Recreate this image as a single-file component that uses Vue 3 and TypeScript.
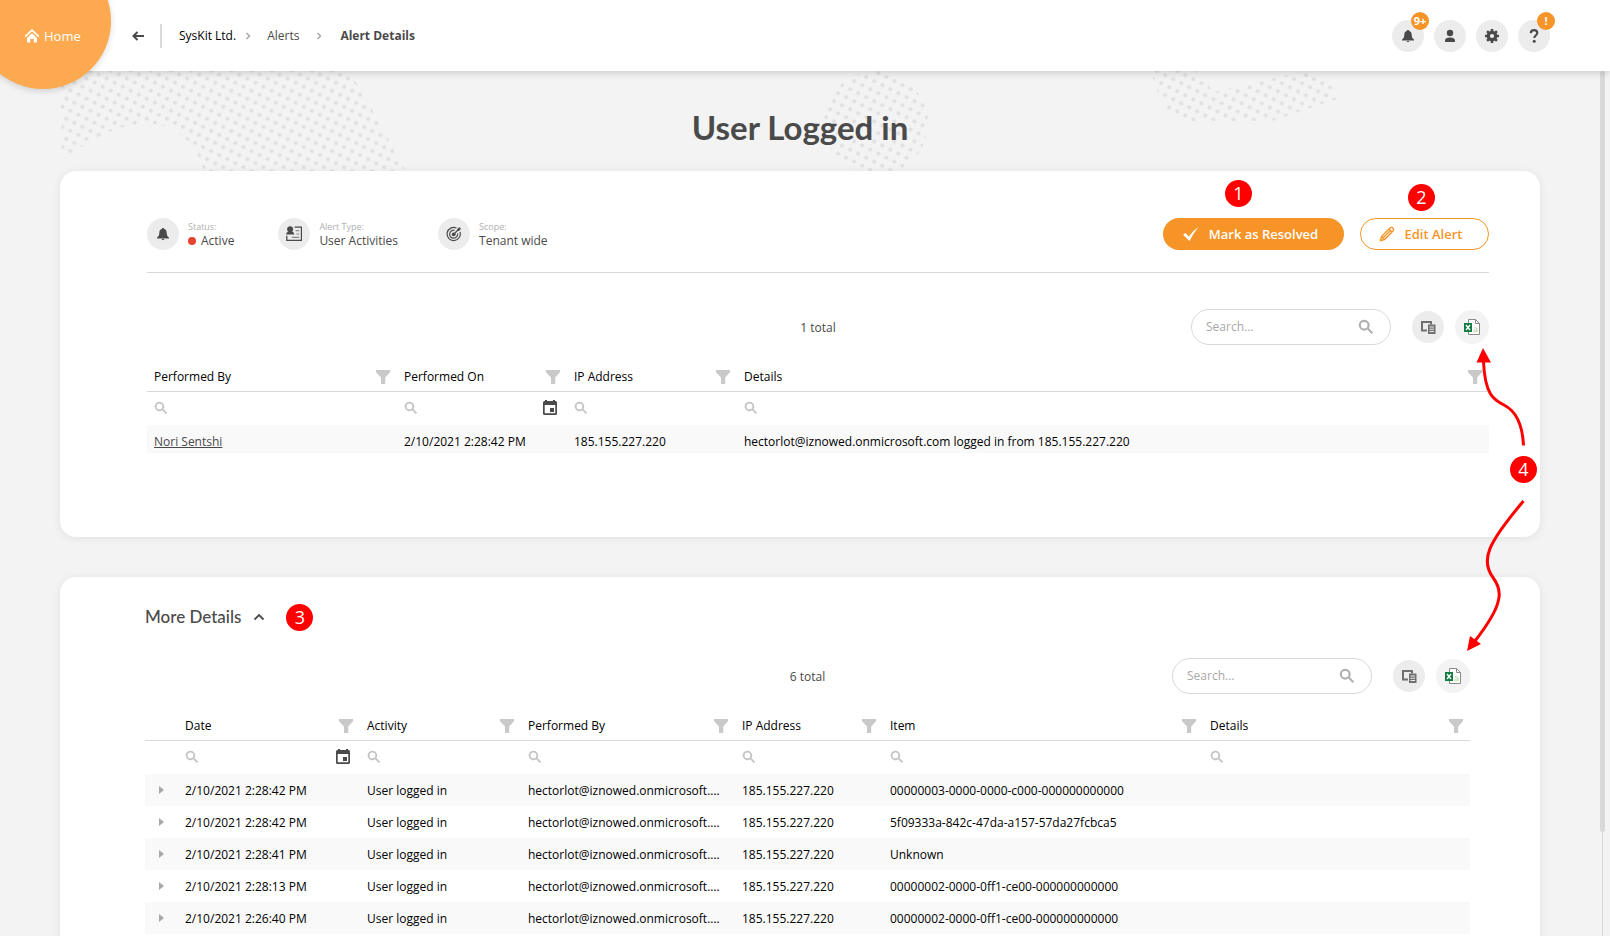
<script setup lang="ts">
import { ref } from 'vue'

interface Column {
  key: string
  label: string
  width: string
  date?: boolean
}

const alertColumns: Column[] = [
  { key: 'by', label: 'Performed By', width: '250px' },
  { key: 'on', label: 'Performed On', width: '170px', date: true },
  { key: 'ip', label: 'IP Address', width: '170px' },
  { key: 'details', label: 'Details', width: 'auto' },
]

const detailColumns: Column[] = [
  { key: 'date', label: 'Date', width: '182px', date: true },
  { key: 'activity', label: 'Activity', width: '161px' },
  { key: 'by', label: 'Performed By', width: '214px' },
  { key: 'ip', label: 'IP Address', width: '148px' },
  { key: 'item', label: 'Item', width: '320px' },
  { key: 'details', label: 'Details', width: 'auto' },
]

const user = 'hectorlot@iznowed.onmicrosoft.com'
const ip = '185.155.227.220'

function entry(date: string, item: string): Record<string, string> {
  return { date, activity: 'User logged in', by: user, ip, item, details: '' }
}

const detailRows = [
  entry('2/10/2021 2:28:42 PM', '00000003-0000-0000-c000-000000000000'),
  entry('2/10/2021 2:28:42 PM', '5f09333a-842c-47da-a157-57da27fcbca5'),
  entry('2/10/2021 2:28:41 PM', 'Unknown'),
  entry('2/10/2021 2:28:13 PM', '00000002-0000-0ff1-ce00-000000000000'),
  entry('2/10/2021 2:26:40 PM', '00000002-0000-0ff1-ce00-000000000000'),
]

const expanded = ref(true)
const alertSearch = ref('')
const detailSearch = ref('')
</script>

<template>
  <svg class="defs" aria-hidden="true">
    <defs>
      <symbol id="i-bell" viewBox="0 0 14 14">
        <path d="M7 1c.7 0 1.200.4 1.200 1 1.700.5 2.500 1.900 2.500 3.800 0 2.700.8 3.600 2.300 4.800v1H1v-1C2.500 9.400 3.300 8.500 3.300 5.800 3.300 3.900 4.100 2.500 5.800 2 5.800 1.400 6.300 1 7 1zM5.700 12h2.600c0 .7-.6 1.200-1.300 1.200S5.700 12.700 5.700 12z" />
      </symbol>
      <symbol id="i-search" viewBox="0 0 16 16">
        <path d="M6.200.8a5.400 5.400 0 1 0 3.100 9.800l4.200 4.300 1.500-1.500-4.200-4.300A5.400 5.400 0 0 0 6.200.8zm0 2.100a3.300 3.300 0 1 1 0 6.600 3.300 3.300 0 0 1 0-6.600z" />
      </symbol>
      <symbol id="i-funnel" viewBox="0 0 14 14">
        <path d="M0 0h14v2.200L9.200 7.500V14H5V7.500L0 2.200z" />
      </symbol>
      <symbol id="i-calendar" viewBox="0 0 14 15">
        <path d="M2 0h2v1h6V0h2v1H12.500A1.500 1.500 0 0 1 14 2.500v11a1.500 1.500 0 0 1-1.500 1.500h-11A1.500 1.500 0 0 1 0 13.500v-11A1.500 1.500 0 0 1 1.500 1H2zM1.700 5v8.300h10.600V5zM7 8h4v4H7z" />
      </symbol>
      <symbol id="i-columns" viewBox="0 0 16 16">
        <path d="M1 2h11v3.500h-2V4H3v6.500h4v2H1z" />
        <path d="M8 5.500h7.500V15H8zM9.500 7.500v1h4.500v-1zm0 2.300v1h4.500v-1zm0 2.300v1h4.500v-1z" fill-rule="evenodd" />
      </symbol>
      <symbol id="i-excel" viewBox="0 0 18 18">
        <path d="M5.500 1.500h7l4 4v11h-11z" fill="#fff" stroke="#8a8a8a" />
        <path d="M12.500 1.500v4h4" fill="none" stroke="#8a8a8a" />
        <path d="M11 10.200c1.500-.9 3-.5 3 .8v3m0-2c-2-.1-3.300.3-3.300 1.200 0 1.200 2.600 1.100 3.300-.4" fill="none" stroke="#b5dba8" />
        <path d="M1 5h8v9H1z" fill="#107c41" />
        <path d="M3 7l4 5M7 7l-4 5" stroke="#fff" stroke-width="1.400" />
      </symbol>
      <symbol id="i-chevron" viewBox="0 0 6 10">
        <path d="M1.500 2 4.500 5 1.500 8" fill="none" stroke="#a8a8a8" stroke-width="1.500" />
      </symbol>
      <pattern id="dots" width="9" height="9" patternUnits="userSpaceOnUse" patternTransform="rotate(26.600)">
        <circle cx="4.500" cy="4.500" r="2" fill="#e0e0e0" />
      </pattern>
    </defs>
  </svg>

  <div class="page">
    <header class="topbar">
      <a class="home" href="#">
        <svg class="home-icon" viewBox="0 0 14 14" aria-hidden="true">
          <path d="M.6 7.200 7 1.200l6.400 6" fill="none" stroke="#fff" stroke-width="1.700" stroke-linecap="round" />
          <path d="M7 4.200 12 9v3.500a1 1 0 0 1-1 1H8.700V10H5.300v3.500H3a1 1 0 0 1-1-1V9z" fill="#fff" />
        </svg>
        Home
      </a>
      <button class="back" type="button" aria-label="Back">
        <svg viewBox="0 0 12 10" aria-hidden="true">
          <path d="M12 5H1.500M5.500 1l-4 4 4 4" fill="none" stroke="#4a4a4a" stroke-width="2" />
        </svg>
      </button>
      <nav class="crumbs" aria-label="Breadcrumb">
        <a class="root" href="#">SysKit Ltd.</a>
        <svg class="chevron" aria-hidden="true"><use href="#i-chevron" /></svg>
        <a class="parent" href="#">Alerts</a>
        <svg class="chevron" aria-hidden="true"><use href="#i-chevron" /></svg>
        <span class="current">Alert Details</span>
      </nav>
      <div class="actions">
        <button class="round" type="button" aria-label="Notifications">
          <svg class="i14" aria-hidden="true"><use href="#i-bell" /></svg>
          <span class="badge">9+</span>
        </button>
        <button class="round" type="button" aria-label="Account">
          <svg class="i14" viewBox="0 0 14 14" aria-hidden="true">
            <circle cx="7" cy="4" r="3.200" />
            <path d="M2 13v-1.500C2 9.500 4 8.500 7 8.500s5 1 5 3V13z" />
          </svg>
        </button>
        <button class="round" type="button" aria-label="Settings">
          <svg class="i14" viewBox="0 0 14 14" aria-hidden="true">
            <circle cx="7" cy="7" r="3.700" fill="none" stroke="#4a4a4a" stroke-width="3.200" />
            <path d="M7 0v3M7 11v3M0 7h3M11 7h3M2.050 2.050l2 2M9.950 9.950l2 2M2.050 11.950l2-2M9.950 4.050l2-2" stroke="#4a4a4a" stroke-width="2.600" />
          </svg>
        </button>
        <button class="round" type="button" aria-label="Help">
          <svg class="i14" viewBox="0 0 14 14" aria-hidden="true">
            <path d="M3.800 4.200C3.800 2 5.200 1.100 7 1.100s3.300 1 3.300 2.900c0 2.200-3 2.300-3 5" fill="none" stroke="#4a4a4a" stroke-width="2.100" />
            <circle cx="7.200" cy="12.300" r="1.500" />
          </svg>
          <span class="badge">!</span>
        </button>
      </div>
    </header>

    <div class="body">
      <svg class="deco deco-left" viewBox="0 71 420 100" aria-hidden="true">
        <path d="M60 71H348Q362 90 382 128L406 171H204Q190 126 148 123 110 124 62 160z" fill="url(#dots)" />
      </svg>
      <svg class="deco deco-mid" viewBox="0 0 104 100" aria-hidden="true">
        <circle cx="52" cy="52" r="52" fill="url(#dots)" />
      </svg>
      <svg class="deco deco-right" viewBox="1140 71 210 60" aria-hidden="true">
        <path d="M1151 71Q1160 110 1180 121H1272L1340 98Q1330 78 1305 71L1214 92 1196 71z" fill="url(#dots)" />
      </svg>

      <h1>User Logged in</h1>

      <section class="card first">
        <div class="meta">
          <div class="fact">
            <span class="disc"><svg class="i14" aria-hidden="true"><use href="#i-bell" /></svg></span>
            <div class="fact-text"><small>Status:</small><p><i class="dot"></i>Active</p></div>
          </div>
          <div class="fact">
            <span class="disc">
              <svg class="i16" viewBox="0 0 14 14" aria-hidden="true">
                <path d="M7.500 1h6v11.500H.7V8.500" fill="none" stroke="#4a4a4a" stroke-width="1.100" />
                <circle cx="3.600" cy="2.800" r="2.600" />
                <path d="M0 7.500C.3 5 2 4.500 3.600 4.500S7 5 7.300 7.500z" />
                <path d="M8.500 4h3M9 7h2.500M5 10h6.500" stroke="#8a8a8a" />
              </svg>
            </span>
            <div class="fact-text"><small>Alert Type:</small><p>User Activities</p></div>
          </div>
          <div class="fact">
            <span class="disc">
              <svg class="i16" viewBox="0 0 16 16" aria-hidden="true">
                <path d="M10.500 2A6.600 6.600 0 1 0 14 6M8.500 4.300A4 4 0 1 0 11.600 7.500" fill="none" stroke="#4a4a4a" stroke-width="1.200" />
                <circle cx="7.700" cy="8.300" r="1.900" />
                <path d="M7.700 8.300 13 3" stroke="#4a4a4a" stroke-width="1.300" />
                <path d="M11.200 3.200 13.500.8l.3 1.400 1.600.4-2.500 2.400-1.500-.3z" />
              </svg>
            </span>
            <div class="fact-text"><small>Scope:</small><p>Tenant wide</p></div>
          </div>
          <div class="cta">
            <button class="pill solid" type="button">
              <svg class="i16" viewBox="0 0 16 16" aria-hidden="true">
                <path d="M0 8.700 2.500 7l3.200 3.700Q9.500 4.800 15.500 1 10.500 7 6.500 15z" fill="#fff" />
              </svg>
              Mark as Resolved
              <span class="note note-1">1</span>
            </button>
            <button class="pill outline" type="button">
              <svg class="i16" viewBox="0 0 16 16" aria-hidden="true">
                <path d="M1.500 14.500 2.500 10.500 11 2q1-1 2.200-.4l1.200 1.200q.7 1.200-.4 2.200L5.500 13.500zM2.500 10.500l3 3M4 12l7.500-7.500M10 3l3 3" fill="none" stroke="#f79428" stroke-width="1.400" />
              </svg>
              Edit Alert
              <span class="note note-2">2</span>
            </button>
          </div>
        </div>

        <div class="toolbar">
          <span class="total">1 total</span>
          <label class="search">
            <input v-model="alertSearch" type="text" placeholder="Search..." aria-label="Search alerts" />
            <svg class="i16" aria-hidden="true"><use href="#i-search" /></svg>
          </label>
          <button class="round columns" type="button" aria-label="Choose columns"><svg class="i16" aria-hidden="true"><use href="#i-columns" /></svg></button>
          <button class="round export" type="button" aria-label="Export to Excel"><svg class="i18" aria-hidden="true"><use href="#i-excel" /></svg></button>
        </div>

        <table class="grid">
          <colgroup><col v-for="c in alertColumns" :key="c.key" :style="{ width: c.width }" /></colgroup>
          <thead>
            <tr>
              <th v-for="c in alertColumns" :key="c.key" scope="col">
                <div class="head">{{ c.label }}<svg class="i14" aria-hidden="true"><use href="#i-funnel" /></svg></div>
              </th>
            </tr>
            <tr class="filters">
              <td v-for="c in alertColumns" :key="c.key">
                <div class="filter">
                  <svg class="glass" aria-hidden="true"><use href="#i-search" /></svg>
                  <input type="text" :aria-label="'Filter ' + c.label" />
                  <svg v-if="c.date" class="cal" aria-hidden="true"><use href="#i-calendar" /></svg>
                </div>
              </td>
            </tr>
          </thead>
          <tbody>
            <tr>
              <td><a href="#">Nori Sentshi</a></td>
              <td>2/10/2021 2:28:42 PM</td>
              <td>{{ ip }}</td>
              <td>{{ user }} logged in from {{ ip }}</td>
            </tr>
          </tbody>
        </table>

        <div class="callout">
          <svg viewBox="0 0 80 320" aria-hidden="true">
            <path d="M33.500 22C35 55 44 60 54 65Q72 74 73.500 105.500M73.500 161C38 203 30 220 43 237.500Q52 250 48 262 45 275 25 301" fill="none" stroke="#f00" stroke-width="3" />
            <path d="M33 8 41 22.500H26.500zM17 311l3-15 11 8z" fill="#f00" />
          </svg>
          <span class="note note-4">4</span>
        </div>
      </section>

      <section class="card second">
        <div class="more">
          <h2>
            <button type="button" :aria-expanded="expanded" @click="expanded = !expanded">
              More Details
              <svg viewBox="0 0 12 8" aria-hidden="true"><path d="M1.500 6.500 6 2l4.500 4.500" fill="none" stroke="#4a4a4a" stroke-width="1.800" /></svg>
            </button>
          </h2>
          <span class="note">3</span>
        </div>

        <div class="toolbar">
          <span class="total">6 total</span>
          <label class="search">
            <input v-model="detailSearch" type="text" placeholder="Search..." aria-label="Search details" />
            <svg class="i16" aria-hidden="true"><use href="#i-search" /></svg>
          </label>
          <button class="round columns" type="button" aria-label="Choose columns"><svg class="i16" aria-hidden="true"><use href="#i-columns" /></svg></button>
          <button class="round export" type="button" aria-label="Export to Excel"><svg class="i18" aria-hidden="true"><use href="#i-excel" /></svg></button>
        </div>

        <table v-if="expanded" class="grid tall">
          <colgroup>
            <col class="expander" />
            <col v-for="c in detailColumns" :key="c.key" :style="{ width: c.width }" />
          </colgroup>
          <thead>
            <tr>
              <td></td>
              <th v-for="c in detailColumns" :key="c.key" scope="col">
                <div class="head">{{ c.label }}<svg class="i14" aria-hidden="true"><use href="#i-funnel" /></svg></div>
              </th>
            </tr>
            <tr class="filters">
              <td></td>
              <td v-for="c in detailColumns" :key="c.key">
                <div class="filter">
                  <svg class="glass" aria-hidden="true"><use href="#i-search" /></svg>
                  <input type="text" :aria-label="'Filter ' + c.label" />
                  <svg v-if="c.date" class="cal" aria-hidden="true"><use href="#i-calendar" /></svg>
                </div>
              </td>
            </tr>
          </thead>
          <tbody>
            <tr v-for="(r, n) in detailRows" :key="n">
              <td class="toggle">
                <button type="button" aria-label="Expand row">
                  <svg viewBox="0 0 5 8" aria-hidden="true"><path d="M0 0 5 4 0 8z" fill="#a8a8a8" /></svg>
                </button>
              </td>
              <td v-for="c in detailColumns" :key="c.key">{{ r[c.key] }}</td>
            </tr>
          </tbody>
        </table>
      </section>

      <div class="scroll" aria-hidden="true"><div class="thumb"></div></div>
    </div>
  </div>
</template>

<style>
html,
body {
  margin: 0;
  background: #f3f3f3;
}
</style>

<style scoped>
.page {
  height: 100vh;
  display: flex;
  flex-direction: column;
  overflow: hidden;
  font-family: "Open Sans", "Noto Sans", sans-serif;
  font-size: 12px;
  line-height: 16px;
  color: #000;
}
.page *,
.page {
  box-sizing: border-box;
}
.defs {
  position: absolute;
  width: 0;
  height: 0;
}
button {
  font: inherit;
  color: inherit;
  border: 0;
  padding: 0;
  background: none;
  cursor: pointer;
}
a {
  color: inherit;
  text-decoration: none;
}
svg {
  flex: none;
  fill: #4a4a4a;
}
.i14 {
  width: 14px;
  height: 14px;
}
.i16 {
  width: 16px;
  height: 16px;
}
.i18 {
  width: 18px;
  height: 18px;
}

.topbar {
  position: relative;
  z-index: 2;
  flex: none;
  height: 71px;
  padding: 0 60px 0 132px;
  display: flex;
  align-items: center;
  background: #fff;
  box-shadow: 0 1px 8px rgba(0, 0, 0, 0.2);
}
.home {
  position: absolute;
  left: -25px;
  top: -47px;
  width: 136px;
  height: 136px;
  padding: 66px 0 0 50px;
  display: flex;
  align-items: flex-start;
  gap: 5px;
  border-radius: 50%;
  background: #fda94f;
  color: #fff;
  font-size: 13px;
  line-height: 34px;
  box-shadow: 0 2px 6px rgba(0, 0, 0, 0.15);
}
.home-icon {
  width: 14px;
  height: 34px;
}
.back {
  display: flex;
  align-items: center;
  height: 24px;
  padding-right: 16px;
  border-right: 2px solid #d9d9d9;
}
.back svg {
  width: 12px;
  height: 10px;
}
.crumbs {
  display: flex;
  align-items: center;
  gap: 9px;
  padding: 1px 0 0 17px;
  color: #4a4a4a;
}
.crumbs .root {
  color: #000;
}
.crumbs .parent {
  padding-right: 8px;
}
.crumbs .current {
  font-weight: 700;
  padding-left: 2px;
}
.chevron {
  width: 6px;
  height: 10px;
  margin-right: 7px;
}
.actions {
  margin-left: auto;
  display: flex;
  gap: 10px;
}
.round,
.disc {
  position: relative;
  flex: none;
  width: 32px;
  height: 32px;
  display: flex;
  align-items: center;
  justify-content: center;
  border-radius: 50%;
  background: #ececec;
}
.badge {
  position: absolute;
  right: -5px;
  top: -8px;
  width: 18px;
  height: 18px;
  border-radius: 50%;
  background: #f79428;
  color: #fff;
  font-size: 11px;
  font-weight: 700;
  line-height: 18px;
  text-align: center;
}

.body {
  position: relative;
  flex: 1;
  min-height: 0;
  padding: 0 70px 0 60px;
  overflow: hidden;
}
.deco {
  position: absolute;
  top: 0;
}
.deco-left {
  left: 0;
  width: 420px;
  height: 100px;
}
.deco-mid {
  left: calc(50% + 19px);
  width: 104px;
  height: 100px;
}
.deco-right {
  right: 260px;
  width: 210px;
  height: 60px;
}
h1 {
  position: relative;
  margin: 0;
  padding: 38px 0 26px;
  font-family: Lato, "Open Sans", sans-serif;
  font-size: 33px;
  line-height: 36px;
  font-weight: 700;
  text-align: center;
  color: #4a4a4a;
}
.card {
  position: relative;
  background: #fff;
  border-radius: 16px;
  box-shadow: 0 1px 8px rgba(0, 0, 0, 0.08);
}
.first {
  height: 366px;
  padding: 47px 51px 0 87px;
}
.second {
  margin-top: 40px;
  padding: 25px 70px 40px 85px;
}
.meta {
  display: flex;
  align-items: center;
  height: 55px;
  padding-bottom: 23px;
  border-bottom: 1px solid #d9d9d9;
}
.fact {
  display: flex;
  align-items: center;
  gap: 9px;
  margin-right: 40px;
  color: #4a4a4a;
}
.fact:first-child {
  margin-right: 44px;
}
.fact-text {
  padding-top: 2px;
}
.fact small {
  display: block;
  font-size: 9px;
  line-height: 12px;
  color: #b0b0b0;
}
.fact p {
  margin: 0;
  line-height: 16px;
  white-space: nowrap;
}
.dot {
  display: inline-block;
  width: 8px;
  height: 8px;
  margin-right: 5px;
  border-radius: 50%;
  background: #e8432d;
}
.cta {
  display: flex;
  gap: 16px;
  margin-left: auto;
}
.pill {
  position: relative;
  height: 32px;
  display: flex;
  align-items: center;
  justify-content: center;
  gap: 10px;
  border-radius: 16px;
  font-size: 13px;
  font-weight: 600;
}
.solid {
  width: 181px;
  padding-right: 6px;
  background: #f79428;
  color: #fff;
}
.outline {
  width: 129px;
  padding-right: 8px;
  border: 1px solid #f79428;
  color: #f79428;
}
.note {
  width: 27px;
  height: 27px;
  border-radius: 50%;
  background: #f00;
  color: #fff;
  font-size: 18px;
  font-weight: 400;
  line-height: 27px;
  text-align: center;
}
.note-1 {
  position: absolute;
  left: 62px;
  top: -38px;
}
.note-2 {
  position: absolute;
  left: 47px;
  top: -35px;
}
.callout {
  position: absolute;
  right: 0;
  top: 169px;
  z-index: 1;
  width: 90px;
  pointer-events: none;
}
.callout svg {
  display: block;
  width: 80px;
  height: 320px;
}
.note-4 {
  position: absolute;
  left: 60px;
  top: 116px;
}

.toolbar {
  display: grid;
  grid-template-columns: minmax(0, 1fr) 200px 21px 32px 11px 34px;
  align-items: center;
  height: 36px;
}
.first .toolbar {
  margin-top: 36px;
}
.total {
  grid-column: 1 / -1;
  grid-row: 1;
  padding-top: 2px;
  text-align: center;
  color: #4a4a4a;
}
.search {
  grid-column: 2;
  grid-row: 1;
  display: flex;
  align-items: center;
  height: 36px;
  padding: 0 16px 0 14px;
  border: 1px solid #d9d9d9;
  border-radius: 18px;
}
.search input,
.filter input {
  flex: 1;
  min-width: 0;
  border: 0;
  padding: 0;
  outline: 0;
  background: none;
  font: inherit;
}
.search input::placeholder {
  color: #a8a8a8;
  opacity: 1;
}
.search svg {
  fill: #b0b0b0;
}
.columns {
  grid-column: 4;
  grid-row: 1;
}
.columns svg {
  fill: #707070;
}
.export {
  grid-column: 6;
  grid-row: 1;
  width: 34px;
  height: 34px;
  background: #f3f3f3;
}

.grid {
  width: 100%;
  margin-top: 16px;
  table-layout: fixed;
  border-collapse: separate;
  border-spacing: 0;
}
.expander {
  width: 33px;
}
.grid th,
.grid td {
  padding: 0 7px;
  text-align: left;
  font-weight: 400;
  white-space: nowrap;
  overflow: hidden;
  text-overflow: ellipsis;
}
.grid thead tr:first-child > * {
  height: 31px;
  padding-top: 2px;
  border-bottom: 1px solid #d9d9d9;
}
.head,
.filter {
  display: flex;
  align-items: center;
  justify-content: space-between;
}
.head svg {
  fill: #c9c9c9;
}
.grid .filters td {
  height: 33px;
  padding-bottom: 2px;
}
.filter .glass {
  width: 14px;
  height: 14px;
  fill: #c4c4c4;
}
.filter .cal {
  width: 14px;
  height: 15px;
  margin-right: 3px;
}
.grid tbody td {
  height: 28px;
  padding: 6px 7px 0;
}
.tall tbody td {
  height: 32px;
  padding: 2px 12px 0 7px;
}
.grid tbody tr:nth-child(odd) {
  background: #f9f9f9;
}
.grid tbody a {
  color: #4a4a4a;
  text-decoration: underline;
}
.grid .toggle {
  padding: 0 13px 0 14px;
}
.toggle svg {
  display: block;
  width: 5px;
  height: 8px;
}

.more {
  display: flex;
  align-items: center;
  gap: 21px;
  height: 30px;
  margin-bottom: 26px;
}
h2 {
  margin: 0;
  font-family: Lato, "Open Sans", sans-serif;
  font-size: 17px;
  line-height: 24px;
  font-weight: 500;
  color: #4a4a4a;
}
h2 button {
  display: flex;
  align-items: center;
  gap: 12px;
}
h2 svg {
  width: 12px;
  height: 8px;
}

.scroll {
  position: absolute;
  right: 5px;
  top: 0;
  bottom: 0;
  width: 5px;
  background: linear-gradient(#d9d9d9, #d9d9d9) center / 1px 100% no-repeat;
}
.thumb {
  height: 88%;
  border-radius: 3px;
  background: #d9d9d9;
}
</style>
